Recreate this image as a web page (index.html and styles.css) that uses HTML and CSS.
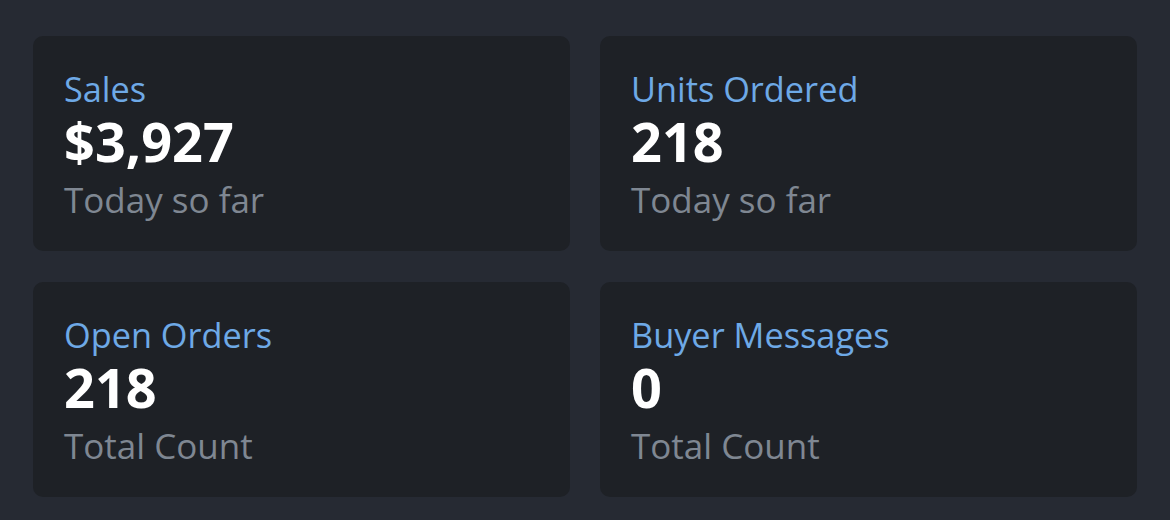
FILE: index.html
```html
<!DOCTYPE html>
<html>
<head>
<meta charset="utf-8">
<link rel="stylesheet" href="styles.css">
</head>
<body>
<div class="grid">
  <div class="card">
    <div class="label">Sales</div>
    <div class="value">$3,927</div>
    <div class="sub">Today so far</div>
  </div>
  <div class="card">
    <div class="label">Units Ordered</div>
    <div class="value">218</div>
    <div class="sub">Today so far</div>
  </div>
  <div class="card">
    <div class="label">Open Orders</div>
    <div class="value">218</div>
    <div class="sub">Total Count</div>
  </div>
  <div class="card">
    <div class="label">Buyer Messages</div>
    <div class="value">0</div>
    <div class="sub">Total Count</div>
  </div>
</div>
</body>
</html>
```
FILE: styles.css
```css
html, body {
  margin: 0;
  padding: 0;
  background: #262a33;
  width: 1170px;
  height: 520px;
  overflow: hidden;
}
.grid {
  display: grid;
  grid-template-columns: 537px 537px;
  grid-auto-rows: 215px;
  column-gap: 30px;
  row-gap: 31px;
  padding: 36px 33px 23px 33px;
  font-family: "Open Sans", sans-serif;
}
.card {
  background: #1e2126;
  border-radius: 10px;
  padding: 30px 31px 0 31px;
  box-sizing: border-box;
}
.label {
  color: #6ea9e6;
  font-size: 34.3px;
  line-height: 46px;
}
.value {
  color: #ffffff;
  font-size: 54px;
  font-weight: 700;
  line-height: 58px;
}
.sub {
  color: #7f8792;
  font-size: 35px;
  line-height: 46px;
  margin-top: 7px;
}
```
